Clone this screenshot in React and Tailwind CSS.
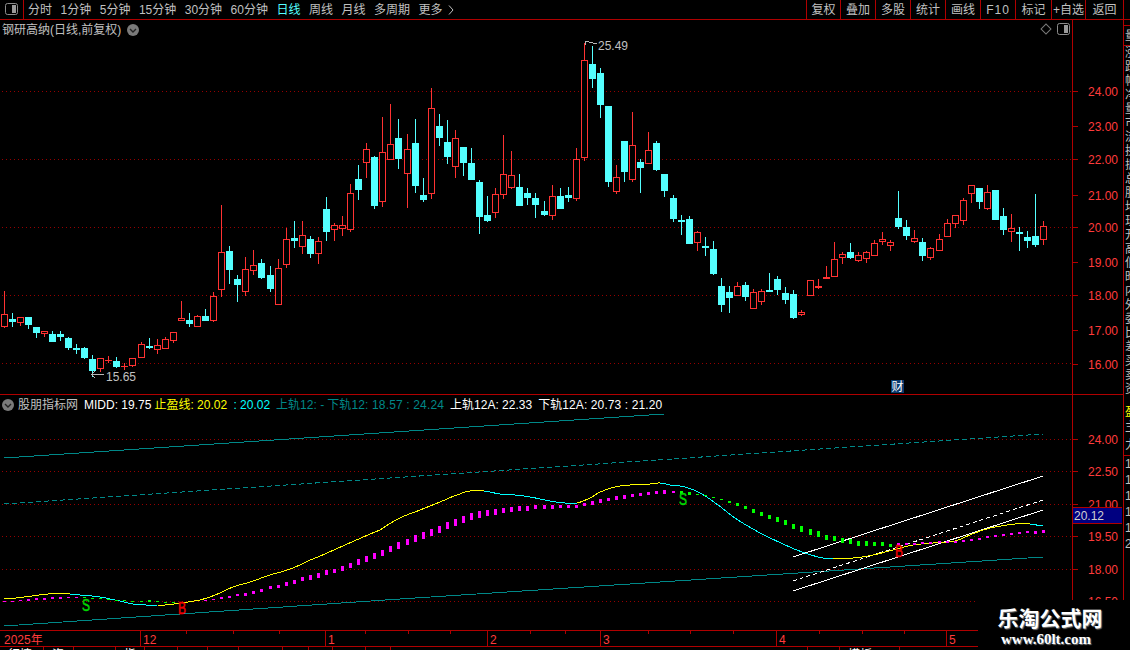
const FONT = "font-['Liberation_Sans','Noto_Sans_CJK_SC',sans-serif]";

// x, color, wick top, wick bottom, body top, body bottom (page pixels)
const candles = [
  [4,"r",291,328,314,327],[12,"c",313,327,319,322],[20,"r",317,326,317,323],[28,"c",317,329,317,325],
  [36,"c",327,338,327,333],[44,"r",331,337,331,334],[52,"c",331,342,334,342],[60,"c",331,341,334,337],
  [68,"c",337,350,338,348],[76,"c",344,354,348,349],[84,"c",347,359,348,358],[92,"c",355,377,359,371],
  [100,"r",358,372,358,369],[108,"r",356,363,360,361],[116,"c",357,368,361,367],[124,"r",363,370,366,367],
  [132,"r",358,367,358,366],[141,"r",342,358,344,358],[149,"c",338,349,346,348],[157,"r",339,354,345,350],
  [165,"r",337,349,339,349],[173,"r",332,343,332,341],[181,"r",301,321,318,321],[189,"c",313,327,320,324],
  [197,"r",315,327,316,327],[205,"c",309,321,316,321],[213,"r",292,322,296,321],[221,"r",205,297,252,290],
  [229,"c",246,284,251,270],[237,"c",275,302,279,285],[245,"r",257,296,269,292],[253,"r",250,275,265,271],
  [261,"c",259,279,263,278],[270,"c",266,292,275,289],[278,"r",259,305,268,305],[286,"r",228,268,239,265],
  [294,"c",221,248,238,241],[302,"r",221,254,235,247],[310,"c",236,258,239,254],[318,"r",237,264,241,254],
  [326,"c",197,241,209,232],[334,"r",223,241,225,230],[342,"r",216,236,225,229],[350,"r",184,232,193,230],
  [358,"c",165,200,179,190],[366,"r",143,178,149,163],[374,"c",156,209,157,206],[382,"r",117,207,152,202],
  [390,"r",104,160,144,160],[398,"c",119,169,138,159],[407,"r",134,208,149,174],[415,"c",119,193,143,186],
  [423,"c",178,202,195,200],[431,"r",88,199,108,194],[439,"c",114,146,126,138],[447,"c",120,164,142,157],
  [455,"r",130,178,138,167],[463,"c",147,176,147,163],[471,"c",148,180,163,180],[479,"c",180,234,182,217],
  [487,"c",196,222,215,221],[495,"r",188,218,194,213],[503,"r",135,199,174,195],[511,"r",151,189,175,188],
  [519,"c",174,206,187,206],[527,"c",188,205,193,198],[535,"c",193,218,198,205],[544,"c",201,216,211,215],
  [552,"r",185,220,196,216],[560,"c",188,209,196,209],[568,"c",187,202,195,198],[576,"r",148,201,159,199],
  [584,"r",43,161,60,158],[592,"c",46,88,64,79],[600,"c",68,118,73,105],[608,"c",106,187,106,182],
  [616,"r",165,194,177,192],[624,"c",141,182,141,172],[632,"r",112,182,145,180],[640,"c",159,193,162,168],
  [648,"r",132,164,150,164],[656,"c",141,171,143,170],[664,"c",174,197,174,191],[673,"c",195,222,198,219],
  [681,"c",215,235,220,222],[689,"c",216,244,219,244],[697,"r",231,251,232,243],[705,"c",237,256,246,248],
  [713,"c",241,275,249,274],[721,"c",278,312,286,305],[729,"c",286,313,292,298],[737,"r",282,296,286,296],
  [745,"c",282,301,285,297],[753,"r",289,309,292,309],[761,"r",289,305,291,302],[769,"c",273,292,290,292],
  [777,"c",276,295,279,290],[785,"c",287,304,293,300],[793,"c",290,319,294,318],[801,"r",310,316,312,315],
  [810,"r",280,296,280,296],[818,"r",279,289,286,288],[826,"r",266,279,277,279],[834,"r",242,277,259,277],
  [842,"r",252,264,254,258],[850,"c",243,259,252,258],[858,"r",252,262,255,261],[866,"r",251,263,252,259],
  [874,"r",240,256,243,256],[882,"r",232,245,239,242],[890,"r",240,251,242,246],[898,"c",191,229,218,227],
  [906,"c",220,240,227,236],[914,"r",230,243,238,242],[922,"c",238,261,242,256],[930,"r",247,260,248,258],
  [939,"r",234,251,239,251],[947,"r",219,237,223,237],[955,"r",215,228,215,224],[963,"r",198,225,200,221],
  [971,"r",185,203,185,194],[979,"c",188,209,188,202],[987,"r",185,210,192,209],[995,"c",190,220,190,220],
  [1003,"c",208,235,216,230],[1011,"r",214,242,228,232],[1019,"c",227,251,232,233],[1027,"c",231,248,237,241],
  [1035,"c",194,247,236,245],[1043,"r",221,245,226,240],
];

// MIDD line
const curve = [
  [4,599],[24,597],[48,594],[70,594],[80,595],[100,597],[120,601],[133,604],[146,605],[157,605],[165,605],[180,603],
  [200,600],[215,595],[233,587],[250,582],[270,575],[287,570],[310,560],[345,545],[380,530],[400,518],[420,510],
  [440,502],[460,494],[470,491],[484,491],[500,494],[515,495],[530,497],[550,501],[565,503],[577,503],[590,498],
  [600,492],[615,487],[630,485],[650,484],[660,483],[670,485],[685,487],[700,493],[715,503],[735,518],[755,530],
  [770,538],[790,547],[805,553],[823,558],[833,558],[853,558],[873,555],[893,550],[913,545],[933,543],[955,541],
  [975,533],[990,528],[1015,524],[1030,524],[1043,526],
];
const curveParts = [
  [4,70,"#ffff00"],[70,157,"#00ffff"],[157,484,"#ffff00"],[484,577,"#00ffff"],
  [577,660,"#ffff00"],[660,833,"#00ffff"],[833,1030,"#ffff00"],[1030,1043,"#00ffff"],
];

// catmull-rom sampling so the line bends like the original instead of in corners
function smooth(pts) {
  const out = [];
  for (let i = 0; i < pts.length - 1; i++) {
    const p0 = pts[Math.max(i - 1, 0)];
    const p1 = pts[i];
    const p2 = pts[i + 1];
    const p3 = pts[Math.min(i + 2, pts.length - 1)];
    for (let k = 0; k < 8; k++) {
      const t = k / 8;
      const y =
        0.5 *
        (2 * p1[1] +
          (p2[1] - p0[1]) * t +
          (2 * p0[1] - 5 * p1[1] + 4 * p2[1] - p3[1]) * t * t +
          (3 * p1[1] - p0[1] - 3 * p2[1] + p3[1]) * t * t * t);
      out.push([p1[0] + (p2[0] - p1[0]) * t, y]);
    }
  }
  out.push(pts[pts.length - 1]);
  return out;
}
const smoothCurve = smooth(curve);

const magenta = [
  [4,601,1],[12,601,1],[20,600,1],[28,600,2],[36,599,2],[44,599,2],[52,598,2],[60,598,2],[68,597,1],[76,597,1],
  [205,600,1],[213,599,1],[221,598,2],[229,597,2],[237,595,2],[245,594,3],[253,592,3],[261,590,3],[270,587,3],
  [278,586,3],[286,584,4],[294,582,4],[302,579,4],[310,577,5],[318,575,5],[326,572,5],[334,571,4],[342,568,5],
  [350,565,5],[358,562,6],[366,559,6],[374,556,6],[382,553,6],[390,549,6],[398,545,7],[407,542,6],[415,538,7],
  [423,535,7],[431,532,7],[439,529,7],[447,525,7],[455,522,7],[463,519,7],[471,516,7],[479,514,7],[487,513,6],
  [495,512,6],[503,510,5],[511,509,5],[519,508,5],[527,508,5],[535,507,4],[544,507,4],[552,507,4],[560,506,3],
  [568,506,3],[576,506,3],[584,504,3],[592,503,4],[600,501,4],[608,499,3],[616,498,4],[624,497,4],[632,495,3],
  [640,494,3],[648,493,3],[656,492,3],[664,492,4],[673,492,2],
  [898,544,2],[906,544,2],[914,544,2],[922,543,2],[930,543,2],[939,542,2],[947,542,2],[955,542,2],[963,541,2],
  [971,540,2],[979,539,2],[987,537,2],[995,536,2],[1003,535,2],[1011,534,2],[1019,533,2],[1027,532,2],[1035,532,3],[1043,531,3],
];
const green = [
  [84,597,1],[92,598,1],[100,598,1],[108,599,1],[116,600,1],[124,600,1],[132,601,1],[141,601,1],[149,601,2],
  [157,601,1],[165,602,1],[173,602,1],[181,602,1],
  [681,492,3],[689,493,3],[697,494,1],[705,495,1],[713,497,1],[721,499,1],[729,502,2],[737,504,3],[745,507,3],
  [753,511,4],[761,514,4],[769,517,4],[777,519,5],[785,522,5],[793,526,5],[801,529,6],[810,532,6],[818,534,6],
  [826,537,5],[834,538,5],[842,540,5],[850,541,5],[858,543,5],[866,543,5],[874,544,4],[882,544,4],[890,545,3],
];

const leftTabs = ["分时","1分钟","5分钟","15分钟","30分钟","60分钟","日线","周线","月线","多周期"];
const rightTabs = [
  ["复权","w-[34px]"],["叠加","w-[35px]"],["多股","w-[35px]"],["统计","w-[35px]"],["画线","w-[35px]"],
  ["F10","w-[35px] tracking-[1px]"],["标记","w-[36px]"],["+自选","w-[34px]"],["返回","w-[38px]"],
];
const bottomTabs = [
  ["w-[44px]","行情"],["w-[30px]","资金"],["w-[42px]",""],["w-[29px]","指标"],["w-[33px]",""],["w-[30px]",""],
  ["w-[31px]",""],["w-[44px]",""],["w-[26px]",""],["w-[24px]",""],["w-[33px]",""],["w-[25px]",""],
  ["w-[417px]",""],["w-[32px]",""],["w-[60px]","模板"],
];
const sideRows = [
  "涨","跌","幅","净","量","市","流","换","振","总","股","均","现","开","高","低","昨","内","外","委","比","差","买","卖","资",
];
const mainAxis = [[24,91],[23,126],[22,159],[21,195],[20,227],[19,262],[18,295],[17,330],[16,364]];
const subAxis = [["24.00",439],["22.50",471],["21.00",504],["19.50",536],["18.00",569],["16.50",601]];
const monthMarks = [[140,"12"],[325,"1"],[487,"2"],[600,"3"],[776,"4"],[946,"5"]];
const weekTicks = [186,233,279,365,408,450,530,565,648,690,733,819,862,904];
const TEAL = "#008888";

function Candle({ c }) {
  const [x, color, wt, wb, bt, bb] = c;
  const h = bb - bt;
  if (color === "c") {
    return (
      <g fill="#54ffff">
        <rect x={x} y={wt} width="1" height={wb - wt} />
        <rect x={x - 3} y={bt} width="7" height={Math.max(h, 2)} />
      </g>
    );
  }
  return (
    <g>
      <rect x={x} y={wt} width="1" height={wb - wt} fill="#ff3232" />
      {h <= 2 ? (
        <rect x={x - 3} y={bt} width="7" height={Math.max(h, 1)} fill="#ff3232" />
      ) : (
        <rect x={x - 2.5} y={bt + 0.5} width="6" height={h - 1} fill="#000" stroke="#ff3232" />
      )}
    </g>
  );
}

function Grid({ ys }) {
  return ys.map((y) => (
    <line key={y} x1="2" x2="1072" y1={y + 0.5} y2={y + 0.5} stroke="#960000" strokeDasharray="1 3" />
  ));
}

function PanelIcon() {
  return (
    <svg width="13" height="12" viewBox="0 0 13 12" className="block">
      <rect x="0.5" y="0.5" width="12" height="11" rx="2" fill="none" stroke="#8c8c8c" />
      <rect x="7" y="2" width="4" height="8" fill="#9a9a9a" />
    </svg>
  );
}

function RoundChevron() {
  return (
    <svg width="12" height="12" viewBox="0 0 12 12" className="block">
      <circle cx="6" cy="6" r="6" fill="#7a7a7a" />
      <path d="M3 5l3 3 3-3" fill="none" stroke="#222" strokeWidth="1.4" />
    </svg>
  );
}

function MainChart() {
  return (
    <svg width="1072" height="374" viewBox="0 20 1072 374" className="block" shapeRendering="crispEdges">
      <Grid ys={[91, 159, 227, 295, 363]} />
      {candles.map((c) => (
        <Candle key={c[0]} c={c} />
      ))}
      <g stroke="#b8b8b8" fill="none">
        <path d="M588 41H585V45M585 41L597 44" />
        <path d="M104 374.5H92M95 371L92 374.5L95 378" />
      </g>
      <text x="598" y="50" fontSize="12" fill="#c0c0c0" shapeRendering="auto" fontFamily="Liberation Sans">25.49</text>
      <text x="106" y="381" fontSize="12" fill="#c0c0c0" shapeRendering="auto" fontFamily="Liberation Sans">15.65</text>
    </svg>
  );
}

function Letter({ x, y, color, children }) {
  return (
    <text
      x={x}
      y={y}
      fill={color}
      stroke={color}
      strokeWidth="0.5"
      fontSize="16"
      fontFamily="Liberation Sans"
      textLength="8"
      lengthAdjust="spacingAndGlyphs"
      shapeRendering="auto"
    >
      {children}
    </text>
  );
}

function SubChart() {
  return (
    <svg width="1072" height="235" viewBox="0 395 1072 235" className="block" shapeRendering="crispEdges">
      <Grid ys={[439, 471, 504, 536, 569, 601]} />
      <g fill="none" strokeWidth="1">
        <polyline points="4,458 664,414" stroke={TEAL} />
        <polyline points="4,504 1043,434" stroke={TEAL} strokeDasharray="5 3" />
        <polyline points="4,626 400,599 1043,557" stroke={TEAL} />
        <polyline points="793,557 1043,476" stroke="#fff" />
        <polyline points="793,581 1043,500" stroke="#fff" strokeDasharray="4 3" />
        <polyline points="793,591 1043,510" stroke="#fff" />
      </g>
      {curveParts.map(([a, b, color]) => (
        <polyline
          key={a}
          fill="none"
          stroke={color}
          points={smoothCurve.filter((p) => p[0] >= a && p[0] <= b).map((p) => p.join(",")).join(" ")}
        />
      ))}
      {magenta.map(([x, y, h]) => (
        <rect key={x} x={x - 1} y={y - h / 2} width="3" height={h} fill="#ff00ff" />
      ))}
      {green.map(([x, y, h]) => (
        <rect key={x} x={x - 1} y={y - h / 2} width="3" height={h} fill="#00ff00" />
      ))}
      <Letter x={82} y={611} color="#00d800">S</Letter>
      <Letter x={679} y={505} color="#00d800">S</Letter>
      <Letter x={178} y={614} color="#f00000">B</Letter>
      <Letter x={895} y={557} color="#f00000">B</Letter>
    </svg>
  );
}

function PriceAxis({ marks, from, height, children }) {
  return (
    <div className="relative w-[50px] shrink-0 border-l border-[#b00000]">
      <svg width="49" height={height} viewBox={`1073 ${from} 49 ${height}`} className="block">
        {marks.map(([label, y]) => (
          <g key={y}>
            <rect x="1073" y={y} width="5" height="1" fill="#b00000" />
            <text x="1088" y={y + 5} fontSize="12" fill="#ff3b3b" fontFamily="Liberation Sans">{label}</text>
          </g>
        ))}
      </svg>
      {children}
    </div>
  );
}

function TimeAxis() {
  return (
    <svg width="1123" height="15" viewBox="0 631 1123 15" className="block" shapeRendering="crispEdges">
      <text x="4" y="644" fontSize="12" fill="#ff3b3b" shapeRendering="auto" fontFamily="Liberation Sans, Noto Sans CJK SC">2025年</text>
      {monthMarks.map(([x, label]) => (
        <g key={x}>
          <rect x={x} y="631" width="1" height="15" fill="#b00000" />
          <text x={x + 3} y="644" fontSize="12" fill="#ff3b3b" shapeRendering="auto" fontFamily="Liberation Sans">{label}</text>
        </g>
      ))}
      {weekTicks.map((x) => (
        <rect key={x} x={x} y="631" width="1" height="3" fill="#b00000" />
      ))}
    </svg>
  );
}

export default function App() {
  return (
    <div className={`relative w-[1130px] h-[650px] overflow-hidden bg-black text-xs text-[#c0c0c0] ${FONT}`}>
      {/* top toolbar */}
      <div className="flex h-5 border-b border-[#b00000]">
        <div className="flex w-6 items-center justify-center border-r border-[#b00000] pb-px">
          <PanelIcon />
        </div>
        <div className="flex flex-1 items-center gap-[8.5px] pl-[4px]">
          {leftTabs.map((t) => (
            <span key={t} className={t === "日线" ? "text-[#54ffff]" : ""}>{t}</span>
          ))}
          <span className="flex items-center gap-[5px]">
            更多
            <svg width="6" height="10" viewBox="0 0 6 10" className="block">
              <path d="M1 0.5L5 5L1 9.5" fill="none" stroke="#c0c0c0" />
            </svg>
          </span>
        </div>
        <div className="flex">
          {rightTabs.map(([t, w]) => (
            <div key={t} className={`flex items-center justify-center border-l border-[#b00000] ${w}`}>{t}</div>
          ))}
        </div>
        <div className="w-[7px] border-l border-[#b00000]" />
      </div>

      <div className="flex">
        <div className="w-[1123px] shrink-0">
          {/* price panel */}
          <div className="flex h-[375px] border-b border-[#b00000]">
            <div className="relative w-[1072px] shrink-0">
              <MainChart />
              <div className="absolute left-[2px] top-[2px] flex items-center gap-[6px]">
                <span>钢研高纳(日线,前复权)</span>
                <RoundChevron />
              </div>
              <div className="absolute right-[2px] top-[3px] flex items-center gap-[7px]">
                <span className="h-[8px] w-[8px] rotate-45 border border-[#7a7a7a]" />
                <PanelIcon />
              </div>
              <div className="absolute left-[891px] top-[360px] flex h-[13px] w-[13px] items-center justify-center bg-[#0a3a6e] text-white">财</div>
            </div>
            <PriceAxis from={20} height={374} marks={mainAxis.map(([p, y]) => [`${p}.00`, y])} />
          </div>

          {/* indicator panel */}
          <div className="flex h-[236px] border-b border-[#b00000]">
            <div className="relative w-[1072px] shrink-0">
              <SubChart />
              <div className="absolute left-[2px] top-[2px] flex items-center whitespace-pre">
                <RoundChevron />
                <span className="ml-[4px]">股朋指标网</span>
                <span className="ml-[6px] text-white">MIDD: 19.75</span>
                <span className="ml-[3px] text-[#ffff00]">止盈线: 20.02</span>
                <span className="ml-[3px] text-[#00ffff]"> : 20.02</span>
                <span className="ml-[6px] text-[#008888]">上轨12: -</span>
                <span className="ml-[3px] tracking-[0.15px] text-[#008888]">下轨12: 18.57 : 24.24</span>
                <span className="ml-[6px] text-white">上轨12A: 22.33</span>
                <span className="ml-[6px] tracking-[0.1px] text-white">下轨12A: 20.73 : 21.20</span>
              </div>
            </div>
            <PriceAxis from={395} height={235} marks={subAxis}>
              <div className="absolute left-0 top-[112px] flex h-[17px] w-full items-center border-y border-[#b00000] bg-[#000080] pl-px text-[#d0d0d0]">
                20.12
              </div>
            </PriceAxis>
          </div>

          {/* time axis */}
          <div className="h-4 border-b border-[#b00000]">
            <TimeAxis />
          </div>
          <div className="flex h-[3px] overflow-hidden text-white">
            {bottomTabs.map(([w, t], i) => (
              <div key={i} className={`shrink-0 border-r border-[#b00000] pl-2 leading-4 ${w}`}>{t}</div>
            ))}
          </div>
        </div>

        {/* clipped side list */}
        <div className="w-[7px] shrink-0 overflow-hidden border-l border-[#b00000] whitespace-nowrap">
          <div className="h-[6px] border-b border-[#b00000]" />
          <div className="h-5 border-b border-[#b00000] pl-px leading-5">量比</div>
          {sideRows.map((t) => (
            <div key={t} className="h-[14px] pl-px leading-[14px]">{t}比</div>
          ))}
          <div className="h-[9px]" />
          <div className="h-[14px] pl-px leading-[14px] text-[#ffff00]">盈</div>
          <div className="h-4 pl-px leading-4">主</div>
          <div className="h-[21px] border-b border-[#b00000] pl-px leading-5">力</div>
          {["16.5", "17.2", "18.3", "19.1", "19.7", "20.1"].map((t) => (
            <div key={t} className="h-4 pl-px leading-4">{t}</div>
          ))}
        </div>
      </div>

      {/* site watermark */}
      <div className="absolute bottom-0 right-0 h-[50px] w-[152px] bg-black text-center text-white">
        <div className="mt-[7px] pr-[8px] text-[21px] font-bold leading-[24px] [text-shadow:1px_1px_1px_#777]">乐淘公式网</div>
        <div className="pr-[16px] font-['Liberation_Serif',serif] text-[15px] font-bold leading-[16px] [text-shadow:1px_1px_1px_#777]">www.60lt.com</div>
      </div>
    </div>
  );
}
